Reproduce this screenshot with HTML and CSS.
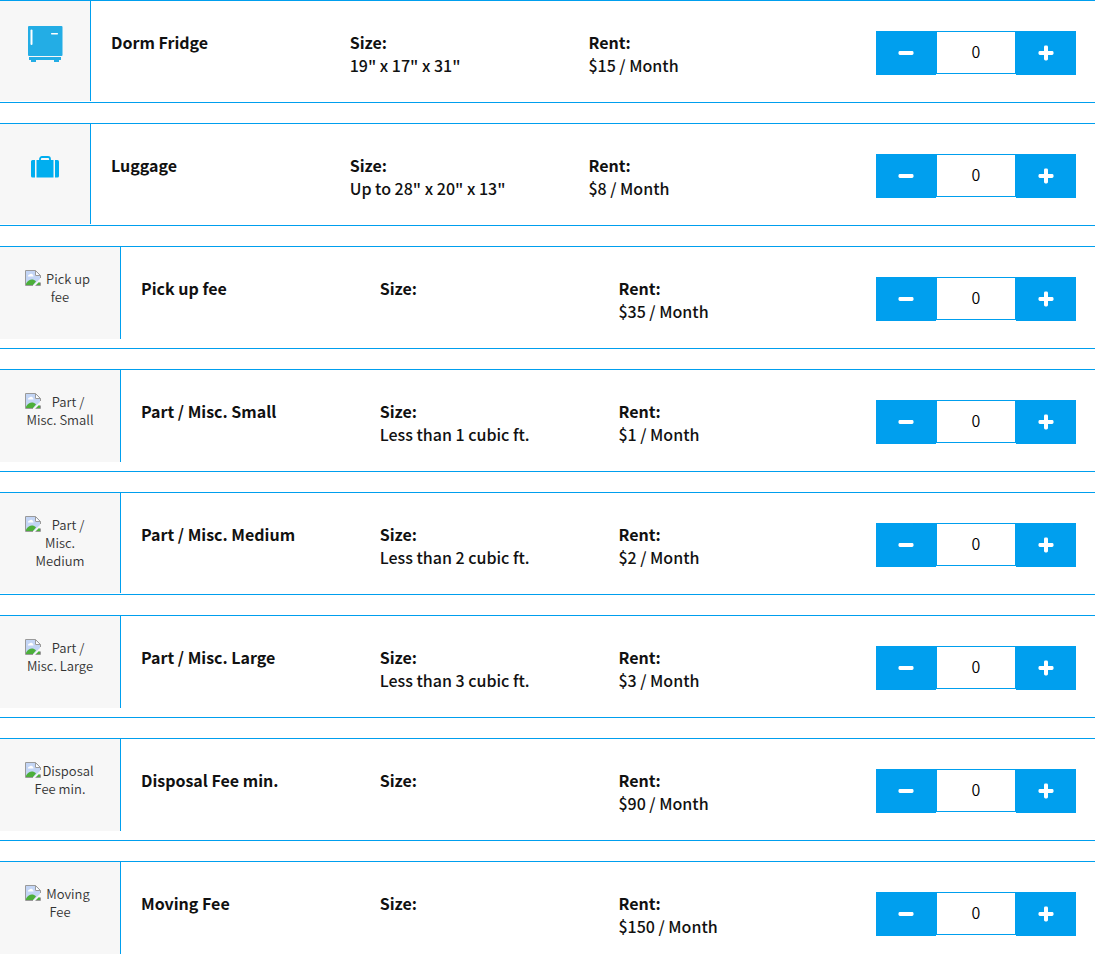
FILE: index.html
```html
<!DOCTYPE html>
<html lang="en">
<head>
    <meta charset="UTF-8">
    <meta name="viewport" content="width=device-width, initial-scale=1.0">
    <title>Storage Items</title>
    <link rel="stylesheet" href="styles.css">
</head>
<body>

<!-- shared icons -->
<svg class="sprite" aria-hidden="true">
    <symbol id="minus" viewBox="0 0 16 16">
        <rect x="0.5" y="6" width="15" height="4" rx="1.4"/>
    </symbol>
    <symbol id="plus" viewBox="0 0 16 16">
        <rect x="0.5" y="6" width="15" height="4" rx="1.4"/>
        <rect x="6" y="0.5" width="4" height="15" rx="1.4"/>
    </symbol>
    <symbol id="missing" viewBox="0 0 16 16">
        <path fill="#c3d5f5" d="M1 1h9l5 5v9H1z"/>
        <path fill="#fff" d="M3 6a1.5 1.5 0 0 1 1.5-1.5 2 2 0 0 1 3.5 1h.5v1H3z"/>
        <path fill="#4caf3a" d="M1 15v-1.5C4 9 8 8.500 11 11.500L8 15z"/>
        <path fill="#f7f7f7" d="M16 8L7.500 16H10l6-5z"/>
        <path fill="#4caf3a" d="M11 15l3-3 1 1v2z"/>
        <path fill="#fff" d="M10 1l5 5h-5z"/>
        <path fill="none" stroke="#9a9a9a" d="M15.5 8V5.500l-5-5H.5v15H8M10.500.5v5h5M10.500 15.500h5v-3"/>
    </symbol>
</svg>

<div class="items">
    <div class="item">
        <div class="thumb">
            <svg class="fridge" viewBox="0 0 36 38" role="img" aria-label="Dorm Fridge">
                <rect x="1" y="1" width="34.5" height="30" rx="1" fill="#23ade5"/>
                <path fill="#23ade5" d="M2 32h32v3h-2v2h-5v-2H9v2H4v-2H2z"/>
                <rect x="3.5" y="4.5" width="2" height="15.5" rx="1" fill="#fff"/>
                <rect x="24" y="8" width="7" height="1.4" rx="0.6" fill="#fff"/>
            </svg>
        </div>
        <div class="info"><strong>Dorm Fridge</strong></div>
        <div class="info"><strong>Size:</strong><p>19" x 17" x 31"</p></div>
        <div class="info"><strong>Rent:</strong><p>$15 / Month</p></div>
        <div class="qty">
            <button type="button" aria-label="Less"><svg><use href="#minus"/></svg></button>
            <input type="text" value="0" aria-label="Dorm Fridge quantity">
            <button type="button" aria-label="More"><svg><use href="#plus"/></svg></button>
        </div>
    </div>

    <div class="item">
        <div class="thumb">
            <svg class="luggage" viewBox="0 0 30 24" role="img" aria-label="Luggage">
                <g fill="#00aeef">
                    <path d="M2.500 5H5v17.500H2.500A1.500 1.500 0 0 1 1 21V6.500A1.500 1.500 0 0 1 2.500 5z"/>
                    <path d="M25 5h2.500A1.500 1.500 0 0 1 29 6.500V21a1.500 1.500 0 0 1-1.500 1.500H25z"/>
                    <rect x="6.5" y="5" width="17" height="17.5"/>
                </g>
                <path fill="none" stroke="#00aeef" stroke-width="1.8" d="M10 5.500V4a2 2 0 0 1 2-2h6a2 2 0 0 1 2 2v1.500"/>
            </svg>
        </div>
        <div class="info"><strong>Luggage</strong></div>
        <div class="info"><strong>Size:</strong><p>Up to 28" x 20" x 13"</p></div>
        <div class="info"><strong>Rent:</strong><p>$8 / Month</p></div>
        <div class="qty">
            <button type="button" aria-label="Less"><svg><use href="#minus"/></svg></button>
            <input type="text" value="0" aria-label="Luggage quantity">
            <button type="button" aria-label="More"><svg><use href="#plus"/></svg></button>
        </div>
    </div>

    <div class="item">
        <div class="thumb no-image"><svg><use href="#missing"/></svg>Pick up fee</div>
        <div class="info"><strong>Pick up fee</strong></div>
        <div class="info"><strong>Size:</strong></div>
        <div class="info"><strong>Rent:</strong><p>$35 / Month</p></div>
        <div class="qty">
            <button type="button" aria-label="Less"><svg><use href="#minus"/></svg></button>
            <input type="text" value="0" aria-label="Pick up fee quantity">
            <button type="button" aria-label="More"><svg><use href="#plus"/></svg></button>
        </div>
    </div>

    <div class="item">
        <div class="thumb no-image"><svg><use href="#missing"/></svg>Part / Misc. Small</div>
        <div class="info"><strong>Part / Misc. Small</strong></div>
        <div class="info"><strong>Size:</strong><p>Less than 1 cubic ft.</p></div>
        <div class="info"><strong>Rent:</strong><p>$1 / Month</p></div>
        <div class="qty">
            <button type="button" aria-label="Less"><svg><use href="#minus"/></svg></button>
            <input type="text" value="0" aria-label="Part / Misc. Small quantity">
            <button type="button" aria-label="More"><svg><use href="#plus"/></svg></button>
        </div>
    </div>

    <div class="item">
        <div class="thumb no-image"><svg><use href="#missing"/></svg>Part / Misc. Medium</div>
        <div class="info"><strong>Part / Misc. Medium</strong></div>
        <div class="info"><strong>Size:</strong><p>Less than 2 cubic ft.</p></div>
        <div class="info"><strong>Rent:</strong><p>$2 / Month</p></div>
        <div class="qty">
            <button type="button" aria-label="Less"><svg><use href="#minus"/></svg></button>
            <input type="text" value="0" aria-label="Part / Misc. Medium quantity">
            <button type="button" aria-label="More"><svg><use href="#plus"/></svg></button>
        </div>
    </div>

    <div class="item">
        <div class="thumb no-image"><svg><use href="#missing"/></svg>Part / Misc. Large</div>
        <div class="info"><strong>Part / Misc. Large</strong></div>
        <div class="info"><strong>Size:</strong><p>Less than 3 cubic ft.</p></div>
        <div class="info"><strong>Rent:</strong><p>$3 / Month</p></div>
        <div class="qty">
            <button type="button" aria-label="Less"><svg><use href="#minus"/></svg></button>
            <input type="text" value="0" aria-label="Part / Misc. Large quantity">
            <button type="button" aria-label="More"><svg><use href="#plus"/></svg></button>
        </div>
    </div>

    <div class="item">
        <div class="thumb no-image"><svg><use href="#missing"/></svg>Disposal Fee min.</div>
        <div class="info"><strong>Disposal Fee min.</strong></div>
        <div class="info"><strong>Size:</strong></div>
        <div class="info"><strong>Rent:</strong><p>$90 / Month</p></div>
        <div class="qty">
            <button type="button" aria-label="Less"><svg><use href="#minus"/></svg></button>
            <input type="text" value="0" aria-label="Disposal Fee min. quantity">
            <button type="button" aria-label="More"><svg><use href="#plus"/></svg></button>
        </div>
    </div>

    <div class="item">
        <div class="thumb no-image"><svg><use href="#missing"/></svg>Moving Fee</div>
        <div class="info"><strong>Moving Fee</strong></div>
        <div class="info"><strong>Size:</strong></div>
        <div class="info"><strong>Rent:</strong><p>$150 / Month</p></div>
        <div class="qty">
            <button type="button" aria-label="Less"><svg><use href="#minus"/></svg></button>
            <input type="text" value="0" aria-label="Moving Fee quantity">
            <button type="button" aria-label="More"><svg><use href="#plus"/></svg></button>
        </div>
    </div>
</div>

</body>
</html>
```
FILE: styles.css
```css
* {
    box-sizing: border-box;
}
body {
    font-family: "Noto Sans CJK JP", "Noto Sans", sans-serif;
    margin: 0;
    background-color: #fff;
    color: #111;
}
.sprite {
    display: none;
}
.items {
    display: flex;
    flex-direction: column;
    gap: 20px;
}
.item {
    display: flex;
    align-items: flex-start;
    min-height: 103px;
    border-top: 1px solid #009fee;
    border-bottom: 1px solid #009fee;
}
.thumb {
    flex: none;
    width: 91px;
    height: 100px;
    padding-top: 24px;
    background-color: #f7f7f7;
    border-right: 1px solid #009fee;
    text-align: center;
}
.fridge {
    width: 36px;
    height: 38px;
}
.luggage {
    width: 30px;
    height: 24px;
    margin-top: 7px;
}
/* items without a picture show their name instead */
.no-image {
    width: 121px;
    height: auto;
    min-height: 92px;
    max-height: 100px;
    padding: 23px 25px;
    font-size: 13px;
    font-weight: 350;
    line-height: 18px;
    color: #333;
}
.no-image svg {
    float: left;
    width: 16px;
    height: 16px;
}
.info {
    width: 21.8%;
    padding: 30px 0 0 20px;
    font-size: 16px;
    font-weight: 500;
    line-height: 23px;
}
.info strong {
    display: block;
    font-weight: 700;
}
.info p {
    margin: 0;
}
.qty {
    display: flex;
    align-items: flex-start;
    margin: 30px 19px 0 auto;
}
.qty button {
    display: flex;
    align-items: center;
    justify-content: center;
    width: 60px;
    height: 44px;
    padding: 0;
    border: 0;
    background-color: #009fee;
    cursor: pointer;
}
.qty button svg {
    width: 16px;
    height: 16px;
    fill: #fff;
}
.qty input {
    width: 80px;
    height: 43px;
    padding: 0 0 3px;
    border: 1px solid #009fee;
    border-radius: 0;
    font-family: inherit;
    font-size: 16px;
    font-weight: 350;
    text-align: center;
    color: #000;
}
```
